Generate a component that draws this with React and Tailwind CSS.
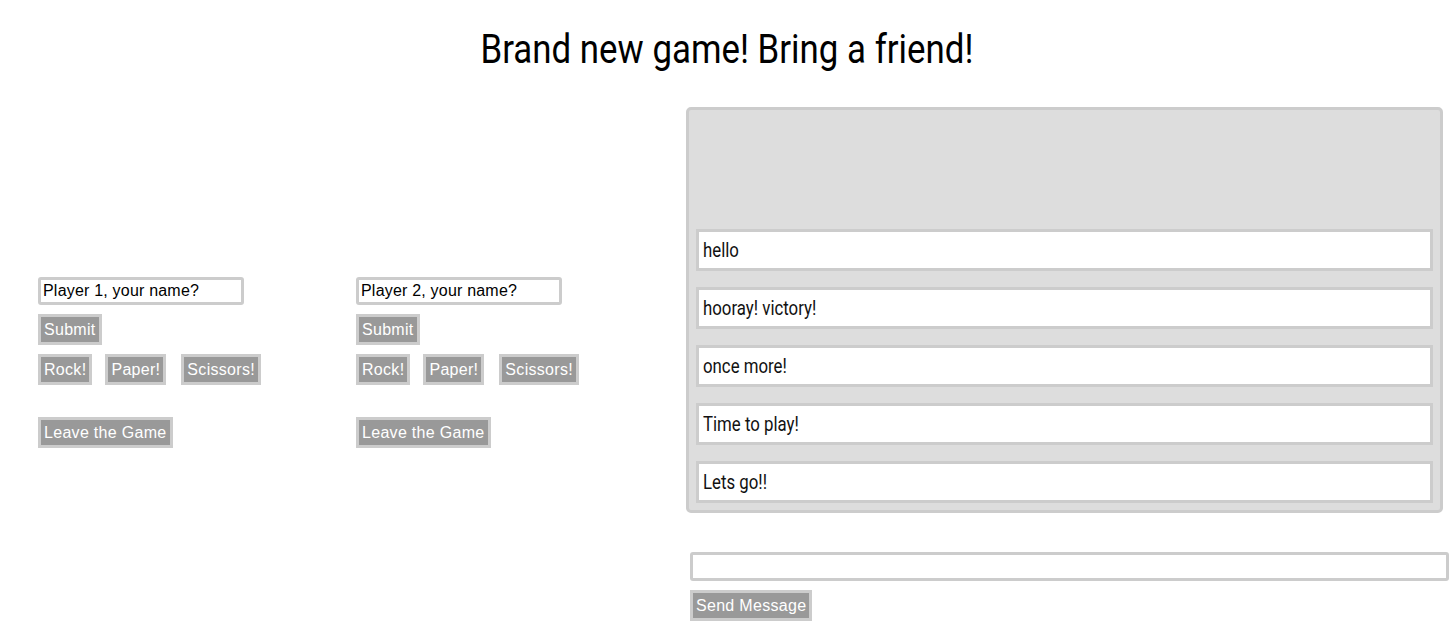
const messages = ['hello', 'hooray! victory!', 'once more!', 'Time to play!', 'Lets go!!']

const narrow = "font-['Roboto','Liberation_Sans',sans-serif]"
const arial = "font-['Liberation_Sans',Arial,sans-serif]"

function Btn({ children, className = '' }) {
  return (
    <button
      className={`${arial} bg-[#999999] border-[3px] border-[#cccccc] text-white text-[16px] leading-[19px] px-[3px] py-[3px] tracking-[0.3px] ${className}`}
    >
      {children}
    </button>
  )
}

function Player({ n }) {
  return (
    <div className="w-[318px] flex flex-col items-start">
      <input
        defaultValue={`Player ${n}, your name?`}
        className={`${arial} w-[206px] h-[28px] border-[3px] border-[#cccccc] rounded-[3px] px-[2px] text-[16px] tracking-[0.2px] text-black outline-none`}
      />
      <Btn className="mt-[9px]">Submit</Btn>
      <div className="flex mt-[9px]">
        <Btn>Rock!</Btn>
        <Btn className="ml-[13px]">Paper!</Btn>
        <Btn className="ml-[15px]">Scissors!</Btn>
      </div>
      <Btn className="mt-[32px]">Leave the Game</Btn>
    </div>
  )
}

export default function App() {
  return (
    <div className="bg-white min-h-[641px] w-[1453px]">
      <h1 className={`${narrow} text-center text-[41px] leading-[48px] text-black pt-[25px]`}>
        <span className="inline-block scale-x-[0.85]">Brand new game! Bring a friend!</span>
      </h1>
      <div className="flex mt-[34px]">
        <div className="w-[686px] pl-[38px] pt-[170px] flex">
          <Player n={1} />
          <Player n={2} />
        </div>
        <div className="flex flex-col">
          <div className="w-[757px] h-[406px] bg-[#dddddd] border-[3px] border-[#cccccc] rounded-[5px] flex flex-col justify-end gap-[16px] px-[7px] pb-[7px]">
            {messages.map((m) => (
              <div
                key={m}
                className={`${narrow} h-[42px] bg-white border-[3px] border-[#cccccc] flex items-center px-[4px] text-[20px] text-[#111]`}
              >
                <span className="inline-block origin-left scale-x-[0.84]">{m}</span>
              </div>
            ))}
          </div>
          <input className="mt-[39px] ml-[4px] w-[759px] h-[29px] border-[3px] border-[#cccccc] rounded-[3px] outline-none" />
          <div className="ml-[4px] mt-[9px]">
            <Btn>Send Message</Btn>
          </div>
        </div>
      </div>
    </div>
  )
}
